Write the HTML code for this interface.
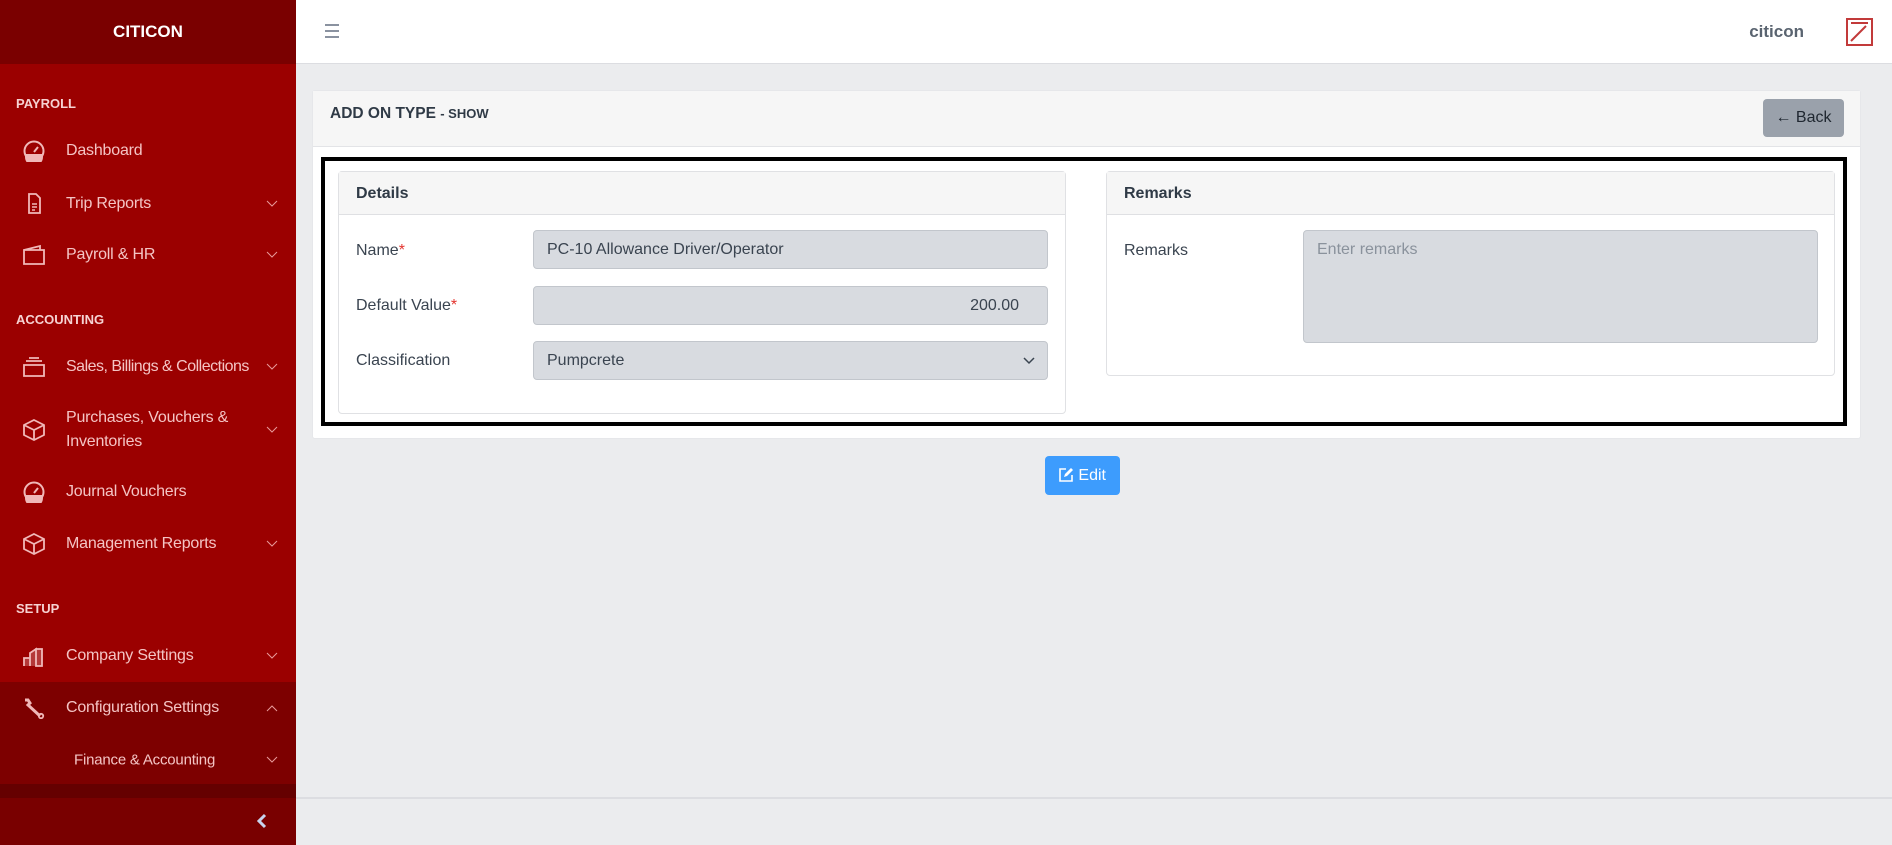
<!DOCTYPE html>
<html><head><meta charset="utf-8"><style>
*{box-sizing:border-box;margin:0;padding:0}
body{width:1892px;height:845px;overflow:hidden;background:#ebecee;font-family:"Liberation Sans",sans-serif;position:relative}
.sb{position:absolute;left:0;top:0;width:296px;height:845px;background:#9b0000}
.sbh{height:64px;background:#7a0000;color:#fff;font-weight:bold;font-size:17px;text-align:center;line-height:64px}
.sec{position:absolute;left:16px;color:#f6d2d2;font-weight:bold;font-size:13px}
.it{position:absolute;left:0;width:296px;color:#f4c4c4;font-size:16px;letter-spacing:-0.2px}
.it .t{position:absolute;left:66px;transform:translateY(-50%)}
.it svg.ic{position:absolute;left:22px;transform:translateY(-50%)}
.it .ch{position:absolute;left:266px;transform:translateY(-50%);}
.hdr{position:absolute;left:296px;top:0;right:0;height:64px;background:#fff;border-bottom:1px solid #dcdde1}
.card{position:absolute;left:312px;top:90px;width:1549px;height:349px;background:#fff;border:1px solid #e6e7ea;border-radius:3px}
.ch1{position:absolute;left:0;top:0;right:0;height:56px;background:#f6f6f6;border-bottom:1px solid #e3e4e7}
.inner{position:absolute;background:#fff;border:1px solid #e0e1e4;border-radius:4px}
.ih{height:43px;background:#f6f6f6;border-bottom:1px solid #dfe0e3;font-weight:bold;font-size:16px;color:#2f3a46;padding-left:17px;line-height:43px}
.lbl{position:absolute;font-size:16px;color:#3a4450}
.inp{position:absolute;background:#d8dbe0;border:1px solid #c2c6cc;border-radius:4px;font-size:16px;color:#3a4450;padding-left:13px;line-height:37px}
.req{color:#e3342f}
</style></head><body>
<div class="sb">
<div class="sbh">CITICON</div>
<div class="sec" style="top:96px">PAYROLL</div>
<div class="sec" style="top:312px">ACCOUNTING</div>
<div class="sec" style="top:601px">SETUP</div>
<div style="position:absolute;left:0;top:682px;width:296px;height:102px;background:#7d0000"></div>
<div style="position:absolute;left:0;top:784px;width:296px;height:14px;background:#650000"></div>
<div style="position:absolute;left:0;top:798px;width:296px;height:47px;background:#790000"></div>
<svg style="position:absolute;left:257px;top:813px" width="10" height="16" viewBox="0 0 10 16"><path d="M8 2L2 8l6 6" stroke="#c8d4ee" stroke-width="3" fill="none"/></svg>

<div class="it" style="top:151px"><svg class="ic" width="24" height="22" viewBox="0 0 24 22"><circle cx="12" cy="11" r="9.5" fill="none" stroke="#f0b8b8" stroke-width="2"/><path d="M3 14h18v3a9 9 0 0 1-18 0z" fill="#f0b8b8"/><path d="M12 12l4-5" stroke="#f0b8b8" stroke-width="2"/></svg><span class="t">Dashboard</span></div>
<div class="it" style="top:204px"><svg class="ic" width="24" height="22" viewBox="0 0 24 22"><path d="M7 1h7l4 4v15H7z" fill="none" stroke="#f0b8b8" stroke-width="1.8"/><path d="M10 11h5M10 14h5M10 17h3" stroke="#f0b8b8" stroke-width="1.5"/></svg><span class="t">Trip Reports</span><svg class="ch" width="12" height="8" viewBox="0 0 12 8"><path d="M1 1l5 5 5-5" stroke="#e89a9a" fill="none"/></svg></div>
<div class="it" style="top:255px"><svg class="ic" width="24" height="22" viewBox="0 0 24 22"><path d="M2 6h20v14H2zM2 6l16-4v4" fill="none" stroke="#f0b8b8" stroke-width="1.8"/></svg><span class="t">Payroll &amp; HR</span><svg class="ch" width="12" height="8" viewBox="0 0 12 8"><path d="M1 1l5 5 5-5" stroke="#e89a9a" fill="none"/></svg></div>
<div class="it" style="top:367px"><svg class="ic" width="24" height="22" viewBox="0 0 24 22"><path d="M2 9h20v11H2zM4 5h16M7 2h10" fill="none" stroke="#f0b8b8" stroke-width="1.8"/></svg><span class="t" style="letter-spacing:-0.5px">Sales, Billings &amp; Collections</span><svg class="ch" width="12" height="8" viewBox="0 0 12 8"><path d="M1 1l5 5 5-5" stroke="#e89a9a" fill="none"/></svg></div>
<div class="it" style="top:430px"><svg class="ic" width="24" height="22" viewBox="0 0 24 22"><path d="M12 1l10 5v10l-10 5-10-5V6zM2 6l10 5 10-5M12 11v10" fill="none" stroke="#f0b8b8" stroke-width="1.8"/></svg><span class="t" style="line-height:24px">Purchases, Vouchers &amp;<br>Inventories</span><svg class="ch" width="12" height="8" viewBox="0 0 12 8"><path d="M1 1l5 5 5-5" stroke="#e89a9a" fill="none"/></svg></div>
<div class="it" style="top:492px"><svg class="ic" width="24" height="22" viewBox="0 0 24 22"><circle cx="12" cy="11" r="9.5" fill="none" stroke="#f0b8b8" stroke-width="2"/><path d="M3 14h18v3a9 9 0 0 1-18 0z" fill="#f0b8b8"/><path d="M12 12l4-5" stroke="#f0b8b8" stroke-width="2"/></svg><span class="t">Journal Vouchers</span></div>
<div class="it" style="top:544px"><svg class="ic" width="24" height="22" viewBox="0 0 24 22"><path d="M12 1l10 5v10l-10 5-10-5V6zM2 6l10 5 10-5M12 11v10" fill="none" stroke="#f0b8b8" stroke-width="1.8"/></svg><span class="t">Management Reports</span><svg class="ch" width="12" height="8" viewBox="0 0 12 8"><path d="M1 1l5 5 5-5" stroke="#e89a9a" fill="none"/></svg></div>
<div class="it" style="top:656px"><svg class="ic" width="24" height="22" viewBox="0 0 24 22"><path d="M2 21V13h6v8M8 21V8l6-4v17M14 21V4h6v17z" fill="#f0b8b8" fill-opacity="0.3" stroke="#f0b8b8" stroke-width="1.8"/></svg><span class="t">Company Settings</span><svg class="ch" width="12" height="8" viewBox="0 0 12 8"><path d="M1 1l5 5 5-5" stroke="#e89a9a" fill="none"/></svg></div>
<div class="it" style="top:708px"><svg class="ic" width="24" height="22" viewBox="0 0 24 22"><path d="M3 3l3 0 2 3-2 2 12 11" fill="none" stroke="#f0b8b8" stroke-width="3"/><circle cx="19" cy="19" r="2.2" fill="none" stroke="#f0b8b8" stroke-width="1.8"/></svg><span class="t">Configuration Settings</span><svg class="ch" width="12" height="8" viewBox="0 0 12 8"><path d="M1 7l5-5 5 5" stroke="#e89a9a" fill="none"/></svg></div>
<div class="it" style="top:760px;font-size:15px"><span class="t" style="left:74px">Finance &amp; Accounting</span><svg class="ch" width="12" height="8" viewBox="0 0 12 8"><path d="M1 1l5 5 5-5" stroke="#e89a9a" fill="none"/></svg></div>
</div>

<div class="hdr">
<div style="position:absolute;left:29px;top:24px;width:14px;height:2px;background:#8a92a0;box-shadow:0 6px 0 #8a92a0,0 12px 0 #8a92a0"></div>
<div style="position:absolute;right:88px;top:22px;font-weight:bold;color:#5a6470;font-size:17px">citicon</div>
<svg style="position:absolute;right:19px;top:18px" width="27" height="28" viewBox="0 0 27 28"><rect x="1" y="1" width="25" height="26" fill="none" stroke="#c23a3a" stroke-width="2"/><path d="M5 5h17M5 23L20 8" stroke="#c23a3a" stroke-width="2" fill="none"/></svg>
</div>

<div class="card">
<div class="ch1"><div style="position:absolute;left:17px;top:14px;font-weight:bold;font-size:15.5px;color:#2f3a46">ADD ON TYPE <span style="font-size:13px">- SHOW</span></div>
<div style="position:absolute;left:1450px;top:8px;width:81px;height:38px;background:#9aa1ab;border-radius:4px;color:#1f2730;font-size:16px;line-height:38px;text-align:center">← Back</div></div>
<div style="position:absolute;left:8px;top:66px;width:1526px;height:269px;border:4px solid #000"></div>
<div class="inner" style="left:25px;top:80px;width:728px;height:243px"><div class="ih">Details</div>
<div class="lbl" style="left:17px;top:70px">Name<span class="req">*</span></div>
<div class="lbl" style="left:17px;top:125px">Default Value<span class="req">*</span></div>
<div class="lbl" style="left:17px;top:180px">Classification</div>
<div class="inp" style="left:194px;top:58px;width:515px;height:39px">PC-10 Allowance Driver/Operator</div>
<div class="inp" style="left:194px;top:114px;width:515px;height:39px;text-align:right;padding-right:28px">200.00</div>
<div class="inp" style="left:194px;top:169px;width:515px;height:39px">Pumpcrete<svg style="position:absolute;right:12px;top:15px" width="12" height="8" viewBox="0 0 12 8"><path d="M1 1l5 5 5-5" stroke="#3a4450" stroke-width="1.5" fill="none"/></svg></div>
</div>
<div class="inner" style="left:793px;top:80px;width:729px;height:205px"><div class="ih">Remarks</div>
<div class="lbl" style="left:17px;top:70px">Remarks</div>
<div class="inp" style="left:196px;top:58px;width:515px;height:113px;color:#8a929c">Enter remarks</div>
</div>
</div>

<div style="position:absolute;left:1045px;top:456px;width:75px;height:39px;background:#3d9cfd;border-radius:4px;color:#fff;font-size:16px;line-height:39px;text-align:center"><svg width="15" height="15" viewBox="0 0 15 15" style="vertical-align:-2px"><path d="M7 2H1v12h12V8" fill="none" stroke="#fff" stroke-width="1.6"/><path d="M5 10l1-3 6-6 2 2-6 6z" fill="#fff"/></svg> Edit</div>
<div style="position:absolute;left:296px;top:797px;right:0;height:2px;background:#dcdde1"></div>
</body></html>
